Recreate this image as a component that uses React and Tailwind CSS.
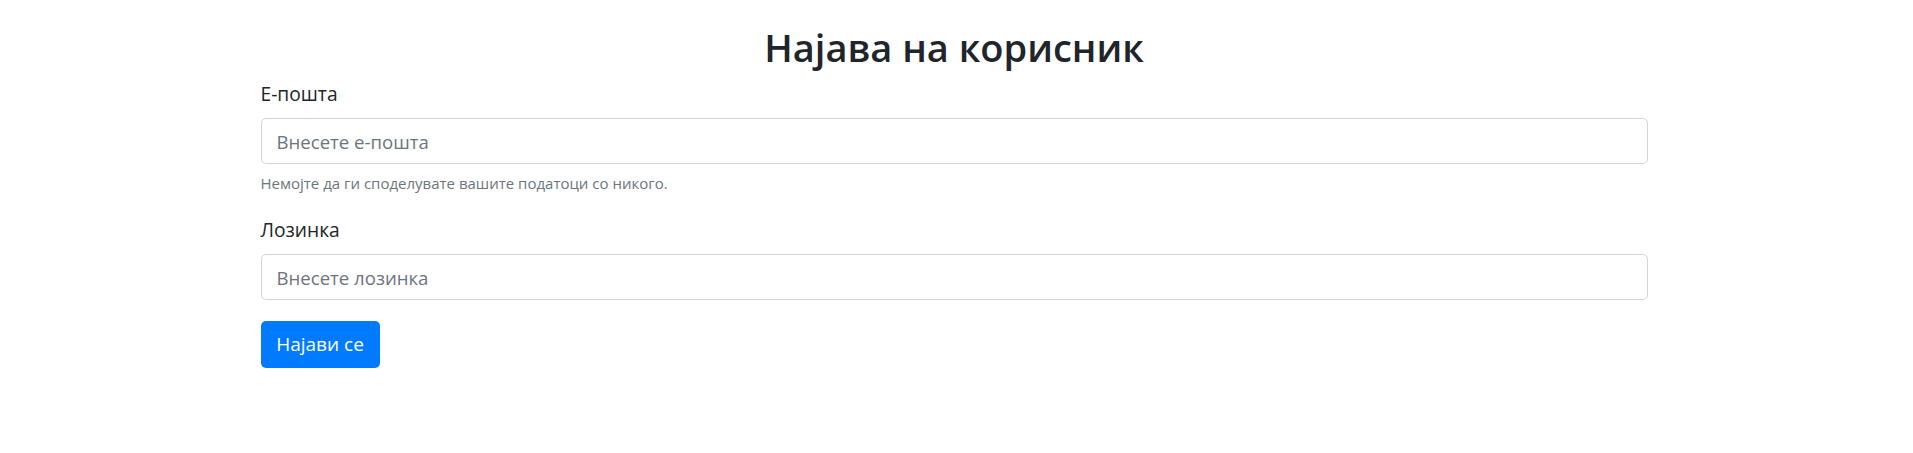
import React from "react";
import { useState } from "react";

const App = () => {
  const [loginData, setLoginData] = useState({ email: "", password: "" });

  const handleSubmit = (e) => {
    e.preventDefault();
  };

  return (
    <div className="min-h-screen bg-white font-['Open_Sans',sans-serif] text-[#212529]">
      <div className="mx-auto w-[1392px] pr-[5px] pt-[21px]">
        {/*----------- heading----------------- */}
        <h2 className="text-center text-[38px] leading-[52px] font-semibold">
          Најава на корисник
        </h2>
        {/*----------- form----------------- */}
        <form onSubmit={handleSubmit} className="mt-[7px]">
          <label className="block text-[19.2px] leading-[28px]">Е-пошта</label>
          <input
            type="email"
            className="mt-[10px] block w-full h-[46px] px-[15px] border border-[#ced4da] rounded-[5px] text-[18.6px] outline-none placeholder:text-[#6c757d]"
            placeholder="Внесете е-пошта"
            value={loginData.email}
            onChange={(e) => setLoginData({ ...loginData, email: e.target.value })}
          />
          <small className="block mt-[8px] text-[15px] leading-[22px] text-[#6c757d]">
            Немојте да ги споделувате вашите податоци со никого.
          </small>
          <label className="block mt-[22px] text-[19.2px] leading-[28px]">Лозинка</label>
          <input
            type="password"
            className="mt-[10px] block w-full h-[46px] px-[15px] border border-[#ced4da] rounded-[5px] text-[18.6px] outline-none placeholder:text-[#6c757d]"
            placeholder="Внесете лозинка"
            value={loginData.password}
            onChange={(e) => setLoginData({ ...loginData, password: e.target.value })}
          />
          <button
            type="submit"
            className="mt-[21px] flex items-center justify-center w-[119px] h-[47px] rounded-[5px] bg-[#007bff] text-white text-[19px]"
          >
            Најави се
          </button>
        </form>
      </div>
    </div>
  );
};

export default App;
